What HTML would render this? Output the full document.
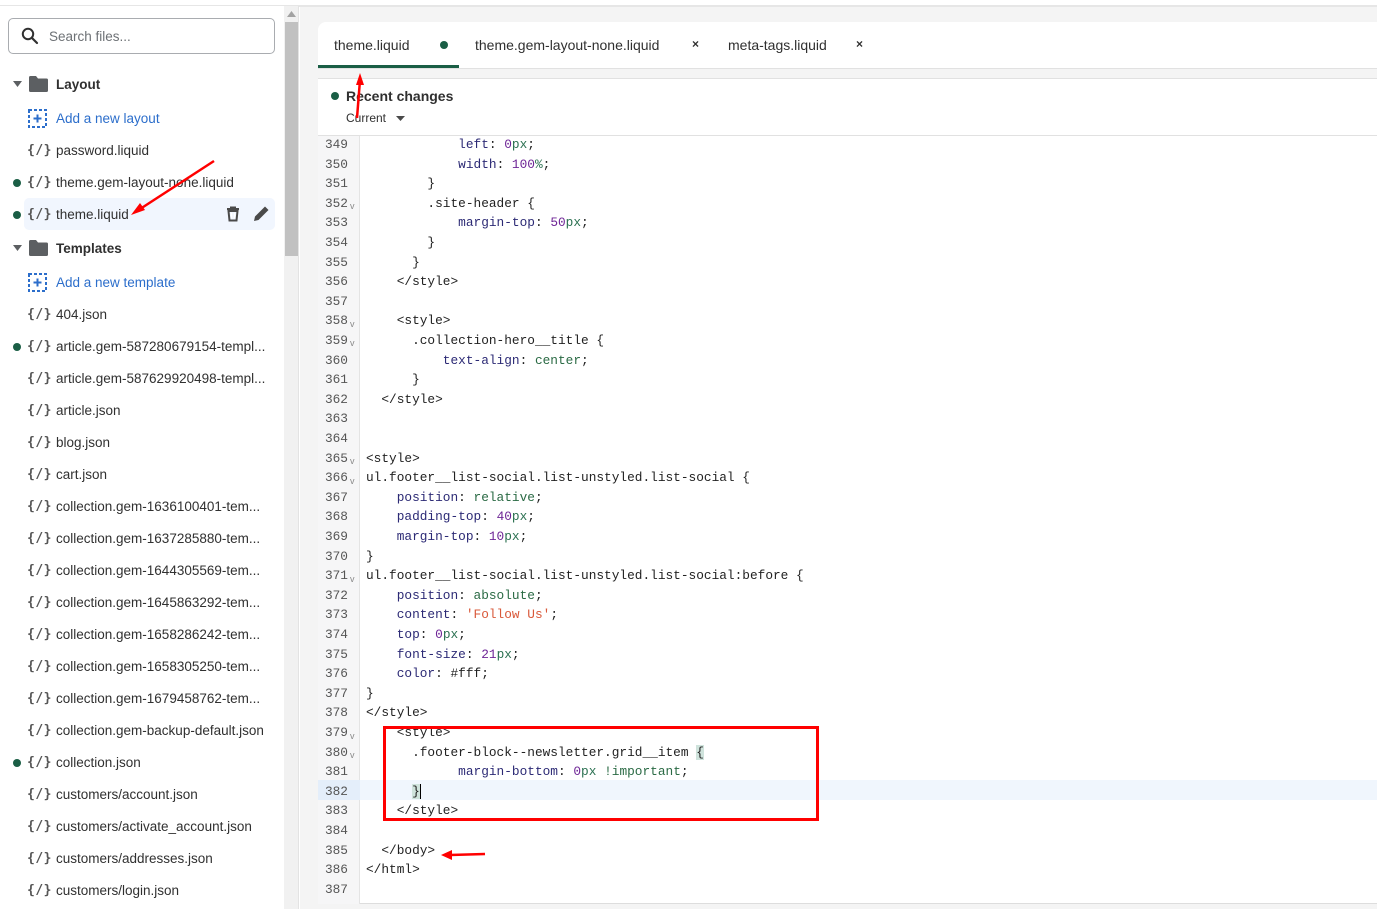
<!DOCTYPE html>
<html><head><meta charset="utf-8"><style>
*{margin:0;padding:0;box-sizing:border-box}
body{width:1377px;height:909px;overflow:hidden;background:#fff;font-family:"Liberation Sans",sans-serif;position:relative}
.abs{position:absolute}
.side{left:0;top:6px;width:284px;height:903px;background:#fff}
.topline{left:0;top:5px;width:1377px;height:2px;background:#e6e6e6}
.search{left:8px;top:18px;width:267px;height:36px;border:1px solid #a9acb0;border-radius:5px;font-size:13.5px;color:#6d7175;padding:10px 0 0 40px}
.row{position:absolute;left:0;width:284px;height:26px;font-size:13.5px;color:#303030;line-height:27px}
.row .ic{position:absolute;left:27px;top:0;font-family:"DejaVu Sans Mono",monospace;font-size:13px;color:#555;letter-spacing:0.5px;font-weight:bold}
.row .t{position:absolute;left:56px;top:0;white-space:nowrap}
.row .dot{position:absolute;left:13px;top:10px;width:8px;height:8px;border-radius:50%;background:#1a5e45}
.folder .t{font-weight:bold;color:#303030}
.blue .t{color:#2c6ecb}
.scroll{left:284px;top:6px;width:15px;height:903px;background:#f1f1f1;border-right:1px solid #e3e3e3}
.thumb{left:285px;top:22px;width:13px;height:234px;background:#c1c1c1}
.right{left:300px;top:7px;width:1077px;height:902px;background:#f4f4f4}
.tabs{left:318px;top:22px;width:1059px;height:47px;background:#fff;border-radius:8px 0 0 0;border-bottom:1px solid #e1e1e1;font-size:14px;color:#303030}
.panel{left:318px;top:78px;width:1059px;height:58px;background:#fff;border-top:1px solid #e1e1e1;border-bottom:1px solid #e1e1e1}
.code{left:318px;top:136px;width:1059px;height:768px;background:#fff;border-radius:0 0 0 8px;border-bottom:1px solid #ddd}
.gut{left:318px;top:136px;width:42px;height:768px;background:#f6f6f7;border-right:1px solid #e4e4e4}
.ln{position:absolute;left:318px;width:30px;text-align:right;font-family:"Liberation Mono",monospace;font-size:12.8px;color:#555;height:19.6px;line-height:19.6px;margin-top:1.5px}
.cl{position:absolute;left:366px;font-family:"Liberation Mono",monospace;font-size:12.8px;color:#222;white-space:pre;height:19.6px;line-height:19.6px;margin-top:1.5px}
.fold{position:absolute;left:350px;font-size:9px;color:#888;font-family:"Liberation Sans",sans-serif;margin-top:1.5px}
.p{color:#2c2a75}.n{color:#6e2596}.u{color:#2a7050}.k{color:#2a6a44}.s{color:#d9593a}
</style></head><body>
<div class="abs topline"></div>
<div class="abs side"></div>
<div class="abs search">Search files...</div>
<svg class="abs" style="left:21px;top:27px" width="18" height="18" viewBox="0 0 18 18"><circle cx="7" cy="7" r="5.2" fill="none" stroke="#303030" stroke-width="2"/><path d="M11 11l5 5" stroke="#303030" stroke-width="2.2" stroke-linecap="round"/></svg>

<div class="abs" style="left:24px;top:198px;width:251px;height:32px;background:#f1f6fe;border-radius:5px"></div>

<div class="row folder" style="top:71px"><svg class="abs" style="left:13px;top:10px" width="10" height="6"><path d="M0 0h9l-4.5 6z" fill="#5c5f62"/></svg><svg class="abs" style="left:29px;top:5px" width="19" height="16"><path d="M0 1.5Q0 0 1.5 0H7l2 2.5h8.5Q19 2.5 19 4v10.5Q19 16 17.5 16h-16Q0 16 0 14.5z" fill="#5c5f62"/></svg><span class="t">Layout</span></div>
<div class="row blue" style="top:105px"><svg class="abs" style="left:28px;top:4px" width="19" height="19"><rect x="1" y="1" width="17" height="17" fill="none" stroke="#2c6ecb" stroke-width="2" stroke-dasharray="3 2"/><path d="M9.5 5.5v8M5.5 9.5h8" stroke="#2c6ecb" stroke-width="2"/></svg><span class="t">Add a new layout</span></div>
<div class="row" style="top:137px"><span class="ic">{/}</span><span class="t">password.liquid</span></div>
<div class="row" style="top:169px"><span class="dot"></span><span class="ic">{/}</span><span class="t">theme.gem-layout-none.liquid</span></div>
<div class="row" style="top:201px"><span class="dot"></span><span class="ic">{/}</span><span class="t">theme.liquid</span>
<svg class="abs" style="left:225px;top:5px" width="16" height="16" viewBox="0 0 16 16"><path d="M2 3h12M6 3V1.5h4V3M3.5 5h9l-1 9.5h-7z" fill="none" stroke="#4a4a4a" stroke-width="2"/><path d="M6.5 7v5M9.5 7v5" stroke="#fff" stroke-width="1"/></svg>
<svg class="abs" style="left:253px;top:4px" width="17" height="17" viewBox="0 0 17 17"><path d="M1 16l1-4.5L12 1.5l3.5 3.5-10 10z" fill="#4a4a4a"/></svg></div>
<div class="row folder" style="top:235px"><svg class="abs" style="left:13px;top:10px" width="10" height="6"><path d="M0 0h9l-4.5 6z" fill="#5c5f62"/></svg><svg class="abs" style="left:29px;top:5px" width="19" height="16"><path d="M0 1.5Q0 0 1.5 0H7l2 2.5h8.5Q19 2.5 19 4v10.5Q19 16 17.5 16h-16Q0 16 0 14.5z" fill="#5c5f62"/></svg><span class="t">Templates</span></div>
<div class="row blue" style="top:269px"><svg class="abs" style="left:28px;top:4px" width="19" height="19"><rect x="1" y="1" width="17" height="17" fill="none" stroke="#2c6ecb" stroke-width="2" stroke-dasharray="3 2"/><path d="M9.5 5.5v8M5.5 9.5h8" stroke="#2c6ecb" stroke-width="2"/></svg><span class="t">Add a new template</span></div>
<div class="row" style="top:301px"><span class="ic">{/}</span><span class="t">404.json</span></div>
<div class="row" style="top:333px"><span class="dot"></span><span class="ic">{/}</span><span class="t">article.gem-587280679154-templ...</span></div>
<div class="row" style="top:365px"><span class="ic">{/}</span><span class="t">article.gem-587629920498-templ...</span></div>
<div class="row" style="top:397px"><span class="ic">{/}</span><span class="t">article.json</span></div>
<div class="row" style="top:429px"><span class="ic">{/}</span><span class="t">blog.json</span></div>
<div class="row" style="top:461px"><span class="ic">{/}</span><span class="t">cart.json</span></div>
<div class="row" style="top:493px"><span class="ic">{/}</span><span class="t">collection.gem-1636100401-tem...</span></div>
<div class="row" style="top:525px"><span class="ic">{/}</span><span class="t">collection.gem-1637285880-tem...</span></div>
<div class="row" style="top:557px"><span class="ic">{/}</span><span class="t">collection.gem-1644305569-tem...</span></div>
<div class="row" style="top:589px"><span class="ic">{/}</span><span class="t">collection.gem-1645863292-tem...</span></div>
<div class="row" style="top:621px"><span class="ic">{/}</span><span class="t">collection.gem-1658286242-tem...</span></div>
<div class="row" style="top:653px"><span class="ic">{/}</span><span class="t">collection.gem-1658305250-tem...</span></div>
<div class="row" style="top:685px"><span class="ic">{/}</span><span class="t">collection.gem-1679458762-tem...</span></div>
<div class="row" style="top:717px"><span class="ic">{/}</span><span class="t">collection.gem-backup-default.json</span></div>
<div class="row" style="top:749px"><span class="dot"></span><span class="ic">{/}</span><span class="t">collection.json</span></div>
<div class="row" style="top:781px"><span class="ic">{/}</span><span class="t">customers/account.json</span></div>
<div class="row" style="top:813px"><span class="ic">{/}</span><span class="t">customers/activate_account.json</span></div>
<div class="row" style="top:845px"><span class="ic">{/}</span><span class="t">customers/addresses.json</span></div>
<div class="row" style="top:877px"><span class="ic">{/}</span><span class="t">customers/login.json</span></div>

<div class="abs scroll"></div>
<svg class="abs" style="left:287px;top:11px" width="9" height="6"><path d="M0 6h9L4.5 0z" fill="#a3a3a3"/></svg>
<div class="abs thumb"></div>
<div class="abs right"></div>

<div class="abs tabs">
<span class="abs" style="left:16px;top:15px">theme.liquid</span>
<span class="abs" style="left:122px;top:19px;width:8px;height:8px;border-radius:50%;background:#1a5e45"></span>
<span class="abs" style="left:157px;top:15px">theme.gem-layout-none.liquid</span>
<span class="abs" style="left:374px;top:15px;font-size:12px;font-weight:bold">×</span>
<span class="abs" style="left:410px;top:15px">meta-tags.liquid</span>
<span class="abs" style="left:538px;top:15px;font-size:12px;font-weight:bold">×</span>
<span class="abs" style="left:0;top:43px;width:141px;height:3px;background:#1a5e45"></span>
</div>
<div class="abs panel">
<span class="abs" style="left:13px;top:13px;width:8px;height:8px;border-radius:50%;background:#1a5e45"></span>
<span class="abs" style="left:28px;top:9px;font-size:14px;font-weight:bold;color:#303030">Recent changes</span>
<span class="abs" style="left:28px;top:32px;font-size:12px;color:#303030">Current</span>
<svg class="abs" style="left:78px;top:37px" width="9" height="6"><path d="M0 0h9L4.5 5z" fill="#4a4a4a"/></svg>
</div>
<div class="abs code"></div>
<div class="abs" style="left:318px;top:780px;width:1059px;height:20px;background:#f0f6fd"></div>
<div class="abs gut"></div>
<div class="abs" style="left:318px;top:780px;width:42px;height:20px;background:#e4eefa"></div>

<div class="ln" style="top:133.4px">349</div><div class="cl" style="top:133.4px">            <span class="p">left</span>: <span class="n">0</span><span class="u">px</span>;</div>
<div class="ln" style="top:153px">350</div><div class="cl" style="top:153px">            <span class="p">width</span>: <span class="n">100</span><span class="u">%</span>;</div>
<div class="ln" style="top:172.6px">351</div><div class="cl" style="top:172.6px">        }</div>
<div class="ln" style="top:192.2px">352</div><span class="fold" style="top:199px">v</span><div class="cl" style="top:192.2px">        .site-header {</div>
<div class="ln" style="top:211.8px">353</div><div class="cl" style="top:211.8px">            <span class="p">margin-top</span>: <span class="n">50</span><span class="u">px</span>;</div>
<div class="ln" style="top:231.4px">354</div><div class="cl" style="top:231.4px">        }</div>
<div class="ln" style="top:251px">355</div><div class="cl" style="top:251px">      }</div>
<div class="ln" style="top:270.6px">356</div><div class="cl" style="top:270.6px">    &lt;/style&gt;</div>
<div class="ln" style="top:290.2px">357</div>
<div class="ln" style="top:309.8px">358</div><span class="fold" style="top:317px">v</span><div class="cl" style="top:309.8px">    &lt;style&gt;</div>
<div class="ln" style="top:329.4px">359</div><span class="fold" style="top:336px">v</span><div class="cl" style="top:329.4px">      .collection-hero__title {</div>
<div class="ln" style="top:349px">360</div><div class="cl" style="top:349px">          <span class="p">text-align</span>: <span class="k">center</span>;</div>
<div class="ln" style="top:368.6px">361</div><div class="cl" style="top:368.6px">      }</div>
<div class="ln" style="top:388.2px">362</div><div class="cl" style="top:388.2px">  &lt;/style&gt;</div>
<div class="ln" style="top:407.8px">363</div>
<div class="ln" style="top:427.4px">364</div>
<div class="ln" style="top:447px">365</div><span class="fold" style="top:454px">v</span><div class="cl" style="top:447px">&lt;style&gt;</div>
<div class="ln" style="top:466.6px">366</div><span class="fold" style="top:474px">v</span><div class="cl" style="top:466.6px">ul.footer__list-social.list-unstyled.list-social {</div>
<div class="ln" style="top:486.2px">367</div><div class="cl" style="top:486.2px">    <span class="p">position</span>: <span class="k">relative</span>;</div>
<div class="ln" style="top:505.8px">368</div><div class="cl" style="top:505.8px">    <span class="p">padding-top</span>: <span class="n">40</span><span class="u">px</span>;</div>
<div class="ln" style="top:525.4px">369</div><div class="cl" style="top:525.4px">    <span class="p">margin-top</span>: <span class="n">10</span><span class="u">px</span>;</div>
<div class="ln" style="top:545px">370</div><div class="cl" style="top:545px">}</div>
<div class="ln" style="top:564.6px">371</div><span class="fold" style="top:572px">v</span><div class="cl" style="top:564.6px">ul.footer__list-social.list-unstyled.list-social:before {</div>
<div class="ln" style="top:584.2px">372</div><div class="cl" style="top:584.2px">    <span class="p">position</span>: <span class="k">absolute</span>;</div>
<div class="ln" style="top:603.8px">373</div><div class="cl" style="top:603.8px">    <span class="p">content</span>: <span class="s">'Follow Us'</span>;</div>
<div class="ln" style="top:623.4px">374</div><div class="cl" style="top:623.4px">    <span class="p">top</span>: <span class="n">0</span><span class="u">px</span>;</div>
<div class="ln" style="top:643px">375</div><div class="cl" style="top:643px">    <span class="p">font-size</span>: <span class="n">21</span><span class="u">px</span>;</div>
<div class="ln" style="top:662.6px">376</div><div class="cl" style="top:662.6px">    <span class="p">color</span>: #fff;</div>
<div class="ln" style="top:682.2px">377</div><div class="cl" style="top:682.2px">}</div>
<div class="ln" style="top:701.8px">378</div><div class="cl" style="top:701.8px">&lt;/style&gt;</div>
<div class="ln" style="top:721.4px">379</div><span class="fold" style="top:729px">v</span><div class="cl" style="top:721.4px">    &lt;style&gt;</div>
<div class="ln" style="top:741px">380</div><span class="fold" style="top:748px">v</span><div class="cl" style="top:741px">      .footer-block--newsletter.grid__item <span style="background:#cfe3dc">{</span></div>
<div class="ln" style="top:760.6px">381</div><div class="cl" style="top:760.6px">            <span class="p">margin-bottom</span>: <span class="n">0</span><span class="u">px</span> <span class="k">!important</span>;</div>
<div class="ln" style="top:780.2px">382</div><div class="cl" style="top:780.2px">      <span style="background:#cfe3dc;border-right:1px solid #000">}</span></div>
<div class="ln" style="top:799.8px">383</div><div class="cl" style="top:799.8px">    &lt;/style&gt;</div>
<div class="ln" style="top:819.4px">384</div>
<div class="ln" style="top:839px">385</div><div class="cl" style="top:839px">  &lt;/body&gt;</div>
<div class="ln" style="top:858.6px">386</div><div class="cl" style="top:858.6px">&lt;/html&gt;</div>
<div class="ln" style="top:878.2px">387</div>

<div class="abs" style="left:383px;top:726px;width:436px;height:95px;border:3px solid #f00"></div>
<svg class="abs" style="left:0;top:0" width="1377" height="909">
<path d="M214 161L137 211" stroke="#f00" stroke-width="2.5"/><path d="M131 215l9-12 5 7z" fill="#f00"/>
<path d="M357 118L360 80" stroke="#f00" stroke-width="2.5"/><path d="M360 73l-4 12h8z" fill="#f00"/>
<path d="M485 854L450 855" stroke="#f00" stroke-width="2.5"/><path d="M441 855l11-5v10z" fill="#f00"/>
</svg>
</body></html>
